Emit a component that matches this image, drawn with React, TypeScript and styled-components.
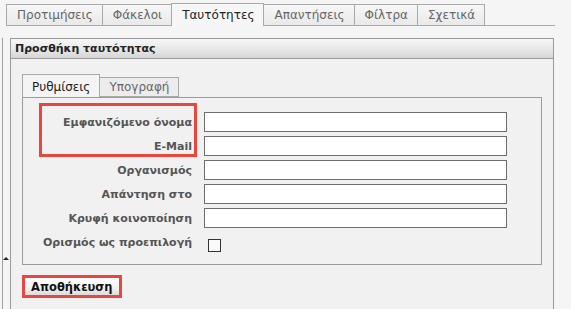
import styled, { createGlobalStyle } from "styled-components";

const GlobalStyle = createGlobalStyle`
  html, body {
    margin: 0;
    padding: 0;
    background: #f5f5f5;
    font-family: "DejaVu Sans", Verdana, sans-serif;
  }
`;

const Page = styled.div`
  width: 571px;
  height: 309px;
  overflow: hidden;
  display: flex;
  flex-direction: column;
`;

const TabBar = styled.div`
  display: flex;
  align-items: flex-end;
  height: 25px;
  margin-left: 6px;
  width: 549px;
  border-bottom: 1px solid #a9a9a9;
`;

const Tab = styled.div<{ $active?: boolean }>`
  box-sizing: border-box;
  height: ${(p) => (p.$active ? 23 : 21)}px;
  margin-bottom: ${(p) => (p.$active ? -1 : 0)}px;
  padding: 0 9px 0 10px;
  display: flex;
  align-items: center;
  font-size: 12px;
  color: ${(p) => (p.$active ? "#222" : "#666")};
  background: ${(p) =>
    p.$active ? "#f6f6f6" : "linear-gradient(#f7f7f7, #e9e9e9)"};
  border: 1px solid #a9a9a9;
  border-bottom: none;
  margin-right: -1px;
`;

const Body = styled.div`
  display: flex;
  margin-top: 12px;
  flex: 1;
`;

const Splitter = styled.div`
  position: relative;
  width: 10px;
  flex: none;
  box-sizing: border-box;
  border-left: 2px solid transparent;

  &::before {
    content: "";
    position: absolute;
    left: 0;
    top: 0;
    bottom: 0;
    width: 1px;
    background: #a0a0a0;
  }
`;

const Handle = styled.svg`
  position: absolute;
  left: 1px;
  top: 218px;
`;

const Panel = styled.div`
  width: 544px;
  box-sizing: border-box;
  border: 1px solid #9a9a9a;
  border-bottom: none;
  background: #f1f1f1;
  display: flex;
  flex-direction: column;
`;

const PanelHeader = styled.div`
  height: 19px;
  border-bottom: 1px solid #9a9a9a;
  background: linear-gradient(#f7f7f7, #e6e6e6 60%, #d5d5d5);
  display: flex;
  align-items: center;
  padding-left: 4px;
  font-size: 11px;
  font-weight: bold;
  color: #222;
`;

const PanelBody = styled.div`
  padding: 15px 11px 0 11px;
`;

const SubTabBar = styled.div`
  display: flex;
  align-items: flex-end;
  height: 23px;
`;

const SubTab = styled.div<{ $active?: boolean }>`
  box-sizing: border-box;
  height: ${(p) => (p.$active ? 24 : 20)}px;
  margin-bottom: ${(p) => (p.$active ? -1 : 0)}px;
  position: relative;
  padding: 0 9px;
  display: flex;
  align-items: center;
  font-size: 12px;
  color: ${(p) => (p.$active ? "#222" : "#666")};
  background: ${(p) => (p.$active ? "#f4f4f4" : "#ececec")};
  border: 1px solid #a9a9a9;
  border-bottom: ${(p) => (p.$active ? "none" : "1px solid #a9a9a9")};
  margin-right: -1px;
`;

const FieldBox = styled.div`
  position: relative;
  width: 520px;
  box-sizing: border-box;
  border: 1px solid #9a9a9a;
  padding: 14px 0 12px 0;
  display: flex;
  flex-direction: column;
  gap: 4px;
`;

const Row = styled.div`
  display: flex;
  align-items: center;
  height: 20px;
`;

const Label = styled.div`
  width: 169px;
  text-align: right;
  font-size: 11px;
  font-weight: bold;
  color: #555;
  padding-right: 12px;
  white-space: nowrap;
`;

const Input = styled.div`
  width: 303px;
  height: 20px;
  box-sizing: border-box;
  border: 1px solid #6e6e6e;
  background: #fff;
`;

const Check = styled.div`
  width: 13px;
  height: 13px;
  box-sizing: border-box;
  border: 1px solid #333;
  background: #fafafa;
  margin-left: 4px;
  margin-top: 6px;
`;

const Highlight = styled.div`
  position: absolute;
  left: 16px;
  top: 5px;
  width: 158px;
  height: 54px;
  box-sizing: border-box;
  border: 3px solid #e8473f;
  pointer-events: none;
`;

const SaveOutline = styled.div`
  margin-top: 10px;
  width: 100px;
  height: 23px;
  box-sizing: border-box;
  border: 3px solid #e8473f;
  display: flex;
`;

const SaveButton = styled.button`
  flex: 1;
  border: none;
  padding: 0 0 0 6px;
  margin: 0;
  text-align: left;
  font-family: inherit;
  font-size: 11.5px;
  font-weight: bold;
  color: #111;
  background: linear-gradient(#ffffff, #f1f1f1 60%, #dcdcdc);
`;

const fields = [
  "Εμφανιζόμενο όνομα",
  "E-Mail",
  "Οργανισμός",
  "Απάντηση στο",
  "Κρυφή κοινοποίηση",
];

const tabs = [
  "Προτιμήσεις",
  "Φάκελοι",
  "Ταυτότητες",
  "Απαντήσεις",
  "Φίλτρα",
  "Σχετικά",
];

export default function App() {
  return (
    <Page>
      <GlobalStyle />
      <TabBar>
        {tabs.map((t) => (
          <Tab key={t} $active={t === "Ταυτότητες"}>
            {t}
          </Tab>
        ))}
      </TabBar>
      <Body>
        <Splitter>
          <Handle width="6" height="5" viewBox="0 0 6 5">
            <path d="M0 4 L3 1 L6 4 Z" fill="#222" />
          </Handle>
        </Splitter>
        <Panel>
          <PanelHeader>Προσθήκη ταυτότητας</PanelHeader>
          <PanelBody>
            <SubTabBar>
              <SubTab $active>Ρυθμίσεις</SubTab>
              <SubTab>Υπογραφή</SubTab>
            </SubTabBar>
            <FieldBox>
              <Highlight />
              {fields.map((f) => (
                <Row key={f}>
                  <Label>{f}</Label>
                  <Input />
                </Row>
              ))}
              <Row>
                <Label>Ορισμός ως προεπιλογή</Label>
                <Check />
              </Row>
            </FieldBox>
            <SaveOutline>
              <SaveButton>Αποθήκευση</SaveButton>
            </SaveOutline>
          </PanelBody>
        </Panel>
      </Body>
    </Page>
  );
}
